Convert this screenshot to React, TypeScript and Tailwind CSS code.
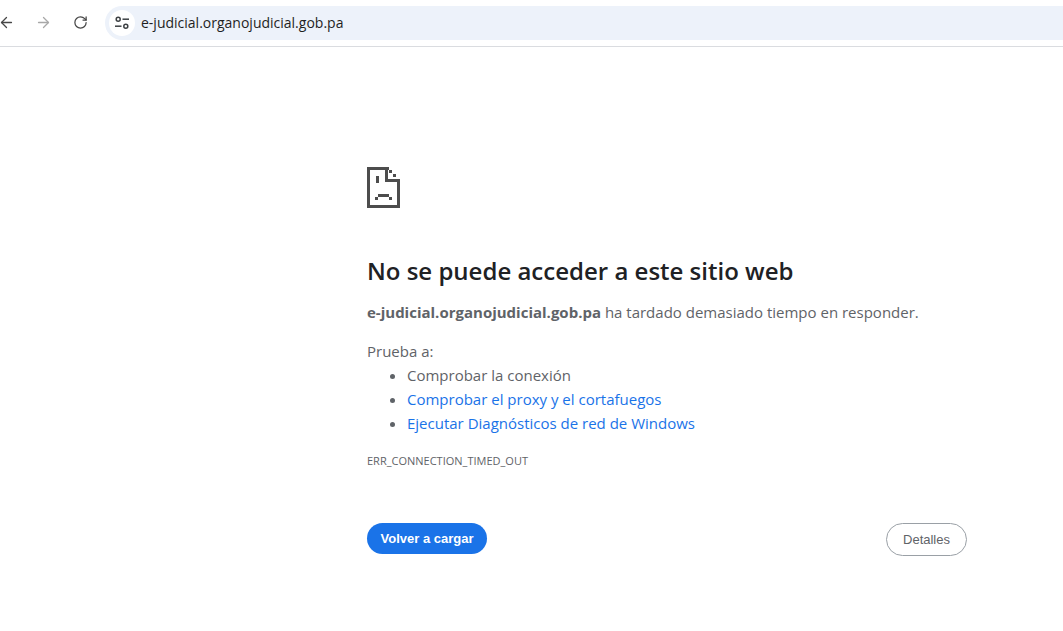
import { ArrowLeft, ArrowRight, RotateCw } from "lucide-react";

function TuneIcon() {
  return (
    <svg width="16" height="16" viewBox="0 0 16 16" fill="none" stroke="#3c4043" strokeWidth="1.5">
      <circle cx="4.2" cy="4.2" r="2" />
      <path d="M8.5 4.2H15" />
      <circle cx="11.8" cy="11.2" r="2" />
      <path d="M1 11.2H7.5" />
    </svg>
  );
}

function SadPage() {
  return (
    <svg width="33" height="41" viewBox="0 0 33 41" fill="#4d4d4d" shapeRendering="crispEdges">
      <rect x="0" y="0" width="3" height="41" />
      <rect x="0" y="0" width="22" height="3" />
      <rect x="0" y="38" width="33" height="3" />
      <rect x="30" y="12" width="3" height="29" />
      <rect x="18" y="0" width="3" height="15" />
      <rect x="18" y="12" width="15" height="3" />
      <rect x="22" y="3" width="3" height="3" />
      <rect x="26" y="7" width="3" height="3" />
      <rect x="9" y="9" width="3" height="7" />
      <rect x="11" y="27" width="11" height="3" />
      <rect x="8" y="30" width="3" height="3" />
      <rect x="22" y="30" width="3" height="3" />
    </svg>
  );
}

export default function App() {
  return (
    <div className="w-[1063px] h-[631px] overflow-hidden bg-white font-['Open_Sans',sans-serif]">
      <div className="h-[47px] border-b border-[#dadce0] flex items-center pb-[1px]">
        <div className="w-[105px] shrink-0 flex items-center">
          <ArrowLeft size={17} strokeWidth={1.8} className="ml-[-2px] text-[#474747]" />
          <ArrowRight size={17} strokeWidth={1.8} className="ml-[20px] text-[#a8a8a8]" />
          <RotateCw size={15} strokeWidth={2} className="ml-[21px] text-[#474747]" />
        </div>
        <div className="flex-1 h-[34px] bg-[#edf2fa] rounded-l-[17px] flex items-center pl-[4px]">
          <div className="w-[26px] h-[26px] rounded-full bg-white flex items-center justify-center">
            <TuneIcon />
          </div>
          <span className="ml-[6px] text-[14px] text-[#1f1f1f]">e-judicial.organojudicial.gob.pa</span>
        </div>
      </div>

      <main className="w-[600px] ml-[367px] pt-[120px]">
        <SadPage />
        <h1 className="mt-[45px] text-[24px] leading-[36px] font-semibold text-[#202124]">No se puede acceder a este sitio web</h1>
        <p className="mt-[11px] text-[15px] leading-[24px] text-[#5f6368]">
          <strong className="font-bold">e-judicial.organojudicial.gob.pa</strong> ha tardado demasiado tiempo en responder.
        </p>
        <p className="mt-[15px] text-[15px] leading-[24px] text-[#5f6368]">Prueba a:</p>
        <ul className="list-disc pl-[40px] text-[15px] leading-[24px] text-[#5f6368]">
          <li>Comprobar la conexión</li>
          <li className="text-[#1a73e8] marker:text-[#5f6368]">Comprobar el proxy y el cortafuegos</li>
          <li className="text-[#1a73e8] marker:text-[#5f6368]">Ejecutar Diagnósticos de red de Windows</li>
        </ul>
        <p className="mt-[18px] text-[11px] leading-[16px] text-[#5f6368]">ERR_CONNECTION_TIMED_OUT</p>
        <div className="mt-[54px] flex items-start justify-between">
          <button className="h-[31px] w-[120px] rounded-full bg-[#1a73e8] text-white text-[13px] font-bold font-['Liberation_Sans',sans-serif]">Volver a cargar</button>
          <button className="h-[33px] w-[81px] rounded-full border border-[#9aa0a6] text-[#5f6368] text-[13px] font-['Liberation_Sans',sans-serif]">Detalles</button>
        </div>
      </main>
    </div>
  );
}
